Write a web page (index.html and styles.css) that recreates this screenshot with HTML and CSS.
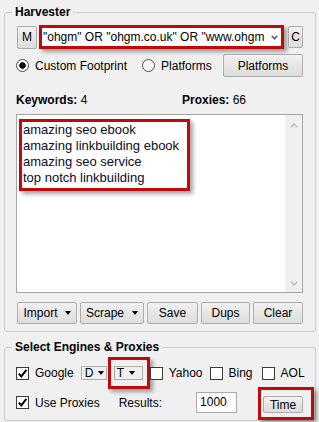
FILE: index.html
```html
<!DOCTYPE html>
<html lang="en">
<head>
    <meta charset="UTF-8">
    <title>Harvester</title>
    <link rel="stylesheet" href="styles.css">
</head>
<body>
    <fieldset class="group">
        <legend>Harvester</legend>

        <div class="row query-row">
            <button class="btn btn-m">M</button>
            <div class="mark query-mark">
                <div class="combo">
                    <span class="combo-text">"ohgm" OR "ohgm.co.uk" OR "www.ohgm</span>
                    <svg class="combo-arrow" width="7" height="5" viewBox="0 0 7 5">
                        <polyline points="0.8,0.8 3.5,3.8 6.2,0.8" fill="none" stroke="#5a5a5a" stroke-width="1.6"/>
                    </svg>
                </div>
            </div>
            <button class="btn btn-c">C</button>
        </div>

        <div class="row mode-row">
            <label class="option"><span class="radio checked"></span>Custom Footprint</label>
            <label class="option option-platforms"><span class="radio"></span>Platforms</label>
            <button class="btn btn-platforms">Platforms</button>
        </div>

        <div class="counts">
            <div><b>Keywords:</b> 4</div>
            <div><b>Proxies:</b> 66</div>
        </div>

        <div class="keywords">
            <div class="keyword-list">
                <div class="mark keyword-mark">
                    <div>amazing seo ebook</div>
                    <div>amazing linkbuilding ebook</div>
                    <div>amazing seo service</div>
                    <div>top notch linkbuilding</div>
                </div>
            </div>
            <div class="scrollbar">
                <svg width="8" height="5" viewBox="0 0 8 5"><polyline points="0.8,4.2 4,1 7.2,4.2" fill="none" stroke="#bdbdbd" stroke-width="1.5"/></svg>
                <svg width="8" height="5" viewBox="0 0 8 5"><polyline points="0.8,0.8 4,4 7.2,0.8" fill="none" stroke="#bdbdbd" stroke-width="1.5"/></svg>
            </div>
        </div>

        <div class="row actions">
            <button class="btn btn-import">Import <i class="caret"></i></button>
            <button class="btn btn-scrape">Scrape <i class="caret"></i></button>
            <button class="btn btn-save">Save</button>
            <button class="btn btn-dups">Dups</button>
            <button class="btn btn-clear">Clear</button>
        </div>
    </fieldset>

    <fieldset class="group engines">
        <legend>Select Engines &amp; Proxies</legend>

        <div class="row engine-row">
            <label class="option"><span class="check checked"><svg width="11" height="11" viewBox="0 0 11 11"><polyline points="1.8,5.6 4.3,8.4 9.4,1.8" fill="none" stroke="#000" stroke-width="2"/></svg></span>Google</label>
            <div class="drop">D <i class="caret"></i></div>
            <div class="mark drop-mark">
                <div class="drop">T <i class="caret"></i></div>
            </div>
            <label class="option"><span class="check"></span>Yahoo</label>
            <label class="option"><span class="check"></span>Bing</label>
            <label class="option option-aol"><span class="check"></span>AOL</label>
        </div>

        <div class="row proxy-row">
            <label class="option"><span class="check checked"><svg width="11" height="11" viewBox="0 0 11 11"><polyline points="1.8,5.6 4.3,8.4 9.4,1.8" fill="none" stroke="#000" stroke-width="2"/></svg></span>Use Proxies</label>
            <span class="results-label">Results:</span>
            <div class="results-input">1000</div>
            <div class="mark time-mark">
                <button class="btn btn-time">Time</button>
            </div>
        </div>
    </fieldset>
</body>
</html>
```

FILE: styles.css
```css
* {
    box-sizing: border-box;
}
body {
    margin: 0;
    padding: 4px 3px 0 4px;
    width: 319px;
    height: 422px;
    overflow: hidden;
    background: #f0f0f0;
    font-family: "Liberation Sans", Arial, sans-serif;
    font-size: 12px;
    color: #000;
}
.group {
    margin: 0;
    min-width: 0;
    padding: 5px 12px 7px 11px;
    border: 1px solid #cbcbcb;
    border-radius: 3px;
}
.group legend {
    font-weight: bold;
    line-height: 16px;
    padding: 0 3px;
    margin-left: -4px;
}
.engines {
    margin-top: 7px;
    padding-top: 7px;
}
.row {
    display: flex;
    align-items: center;
    white-space: nowrap;
}
.row > * {
    flex-shrink: 0;
}
.btn {
    font: inherit;
    color: #000;
    height: 23px;
    padding: 0;
    border: 1px solid #adadad;
    border-radius: 2px;
    background: linear-gradient(#f2f2f2, #e6e6e6 50%, #dddddd);
    display: flex;
    align-items: center;
    justify-content: center;
    gap: 7px;
}
.caret {
    width: 0;
    height: 0;
    border-left: 3.5px solid transparent;
    border-right: 3.5px solid transparent;
    border-top: 4px solid #000;
}

/* red highlight boxes */
.mark {
    border: 3px solid #c00a0a;
    box-shadow: 3px 3px 4px rgba(0, 0, 0, 0.35);
}

/* query row */
.query-row {
    height: 24px;
}
.btn-m {
    width: 20px;
    margin-left: 1px;
}
.query-mark {
    width: 245px;
    height: 24px;
    margin-left: 2px;
}
.combo {
    height: 100%;
    background: #fff;
    display: flex;
    align-items: center;
    overflow: hidden;
}
.combo-text {
    flex: 0 0 222px;
    padding-left: 1px;
    white-space: nowrap;
    overflow: hidden;
}
.combo-arrow {
    flex-shrink: 0;
    margin-left: 7px;
}
.btn-c {
    width: 15px;
    height: 22px;
    margin-left: 4px;
}

/* mode row */
.mode-row {
    margin-top: 5px;
}
.option {
    display: flex;
    align-items: center;
    gap: 6px;
}
.option-platforms {
    margin-left: 15px;
}
.radio {
    width: 13px;
    height: 13px;
    border: 1px solid #4a4a4a;
    border-radius: 50%;
    background: #fff;
}
.radio.checked {
    background: radial-gradient(circle, #111 0 3px, #fff 3.5px);
}
.btn-platforms {
    width: 80px;
    margin-left: auto;
}

/* counts */
.counts {
    display: grid;
    grid-template-columns: 166px auto;
    margin-top: 16px;
    line-height: 15px;
}

/* keywords box */
.keywords {
    display: flex;
    height: 179px;
    margin-top: 6px;
    border: 1px solid #a5a5a5;
    background: #fff;
}
.keyword-list {
    flex: 1;
    padding: 4px 0 0 2px;
    font-size: 13px;
    line-height: 16px;
    color: #0a0a28;
}
.keyword-mark {
    width: 171px;
    height: 72px;
    padding-left: 1px;
}
.scrollbar {
    width: 17px;
    background: #f0f0f0;
    display: flex;
    flex-direction: column;
    justify-content: space-between;
    align-items: center;
    padding: 8px 0 6px;
}

/* action buttons */
.actions {
    margin-top: 9px;
    margin-left: 1px;
    gap: 3px;
}
.actions .btn {
    height: 22px;
}
.btn-import { width: 60px; }
.btn-scrape { width: 64px; gap: 8px; }
.btn-save { width: 51px; }
.btn-dups { width: 49px; }
.btn-clear { width: 50px; }

/* engines */
.engine-row {
    height: 22px;
    gap: 7px;
}
.check {
    width: 13px;
    height: 13px;
    border: 1px solid #3a3a3a;
    background: #fff;
    display: flex;
    align-items: center;
    justify-content: center;
}
.drop {
    height: 14px;
    width: 26px;
    border: 1px solid #adadad;
    background: #efefef;
    display: flex;
    align-items: center;
    gap: 5px;
    padding-left: 3px;
    line-height: 12px;
}
.drop-mark {
    padding: 6px 4px 6px 3px;
    margin: -9px -7px -9px -6px;
}
.drop-mark .drop {
    width: 29px;
    padding-left: 2px;
}
.option-aol {
    margin-left: 2px;
}
.proxy-row {
    height: 21px;
    margin-top: 8px;
}
.results-label {
    margin-left: 19px;
}
.results-input {
    width: 41px;
    height: 21px;
    margin-left: 34px;
    border: 1px solid #aaaaaa;
    background: #fff;
    padding-left: 3px;
    line-height: 19px;
}
.time-mark {
    align-self: flex-end;
    margin: -9px -11px -7px 21px;
    padding: 6px 8px 4px 2px;
}
.btn-time {
    width: 40px;
    height: 17px;
}
```
